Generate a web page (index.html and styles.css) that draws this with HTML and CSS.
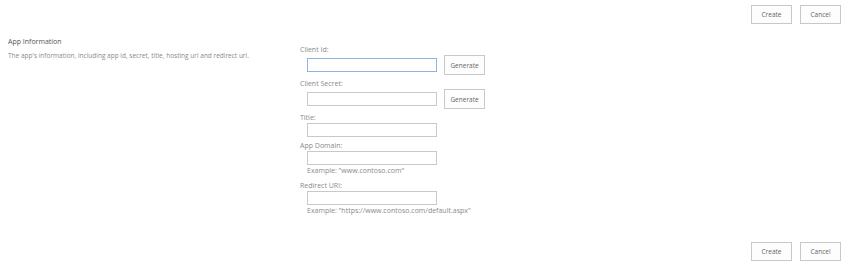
FILE: index.html
```html
<!DOCTYPE html>
<html>
<head>
<meta charset="utf-8">
<link rel="stylesheet" href="styles.css">
</head>
<body>
<div class="page">
  <div class="toolbar top">
    <button class="btn">Create</button>
    <button class="btn">Cancel</button>
  </div>
  <div class="section">
    <div class="desc">
      <div class="heading">App Information</div>
      <div class="text">The app's information, including app id, secret, title, hosting url and redirect url.</div>
    </div>
    <div class="fields">
      <div class="field">
        <div class="label">Client Id:</div>
        <div class="row">
          <input class="box focus" type="text">
          <button class="btn gen">Generate</button>
        </div>
      </div>
      <div class="field">
        <div class="label">Client Secret:</div>
        <div class="row">
          <input class="box" type="text">
          <button class="btn gen">Generate</button>
        </div>
      </div>
      <div class="field">
        <div class="label">Title:</div>
        <div class="row"><input class="box" type="text"></div>
      </div>
      <div class="field">
        <div class="label">App Domain:</div>
        <div class="row"><input class="box" type="text"></div>
        <div class="hint">Example: "www.contoso.com"</div>
      </div>
      <div class="field">
        <div class="label">Redirect URI:</div>
        <div class="row"><input class="box" type="text"></div>
        <div class="hint">Example: "https://www.contoso.com/default.aspx"</div>
      </div>
    </div>
  </div>
  <div class="toolbar bottom">
    <button class="btn">Create</button>
    <button class="btn">Cancel</button>
  </div>
</div>
</body>
</html>
```

FILE: styles.css
```css
html, body {
  margin: 0;
  padding: 0;
  background: #ffffff;
}
body {
  font-family: "Open Sans", "Noto Sans", "Liberation Sans", sans-serif;
  color: #444444;
}
.page {
  width: 850px;
}
.toolbar {
  display: flex;
  justify-content: flex-end;
  gap: 8px;
  padding-right: 9px;
}
.toolbar.top {
  padding-top: 5px;
}
.toolbar.bottom {
  padding-top: 22px;
}
.btn {
  box-sizing: border-box;
  width: 41px;
  height: 19px;
  padding: 0;
  border: 1px solid #c8c8c8;
  background: #fdfdfd;
  font-family: inherit;
  font-size: 6.5px;
  color: #666666;
}
.section {
  display: flex;
  padding-top: 13px;
}
.desc {
  width: 292px;
  padding-left: 8px;
}
.heading {
  font-size: 7px;
  color: #555555;
  line-height: 10px;
}
.text {
  font-size: 6.5px;
  color: #8a8a8a;
  line-height: 10px;
  padding-top: 4px;
}
.fields {
  display: flex;
  flex-direction: column;
  padding-top: 7px;
}
.label {
  font-size: 7px;
  color: #8a8a8a;
  line-height: 11px;
  height: 11px;
}
.row {
  display: flex;
  align-items: center;
  padding-left: 7px;
  gap: 7px;
}
.field {
  padding-bottom: 3px;
}
.box {
  box-sizing: border-box;
  width: 130px;
  height: 14px;
  margin: 0;
  border: 1px solid #c8c8c8;
  background: #fff;
  outline: none;
}
.box.focus {
  border-color: #8fb2e6;
}
.btn.gen {
  height: 20px;
}
.hint {
  font-size: 7px;
  color: #8a8a8a;
  line-height: 12px;
  height: 12px;
  padding-left: 7px;
}
```
